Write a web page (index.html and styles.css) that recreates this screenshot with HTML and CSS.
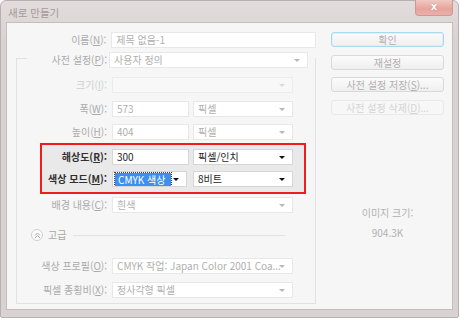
FILE: index.html
```html
<!DOCTYPE html>
<html lang="ko">
<head>
<meta charset="utf-8">
<title>새로 만들기</title>
<link rel="stylesheet" href="styles.css">
</head>
<body>
<div class="window">
  <div class="titlebar">
    <span class="title">새로 만들기</span>
    <div class="close">x</div>
  </div>
  <div class="client">
    <div class="left">
      <div class="row name-row">
        <span class="lbl lbl-name">이름(<u>N</u>):</span>
        <div class="field w-name">제목 없음-1</div>
      </div>
      <div class="group">
        <div class="row preset-row">
          <span class="lbl">사전 설정(<u>P</u>):</span>
          <div class="field select w-preset">사용자 정의<i class="arrow"></i></div>
        </div>
        <div class="row gap9">
          <span class="lbl dim">크기(<u>I</u>):</span>
          <div class="field select w-full disabled"><i class="arrow"></i></div>
        </div>
        <div class="row gap8">
          <span class="lbl">폭(<u>W</u>):</span>
          <div class="field w-num">573</div>
          <div class="field select w-unit">픽셀<i class="arrow"></i></div>
        </div>
        <div class="row gap7">
          <span class="lbl">높이(<u>H</u>):</span>
          <div class="field w-num">404</div>
          <div class="field select w-unit">픽셀<i class="arrow"></i></div>
        </div>
        <div class="highlight">
          <div class="row">
            <span class="lbl strong">해상도(<u>R</u>):</span>
            <div class="field active w-num">300</div>
            <div class="field select active w-unit">픽셀/인치<i class="arrow dark"></i></div>
          </div>
          <div class="row gap6">
            <span class="lbl strong">색상 모드(<u>M</u>):</span>
            <div class="field select active w-mode"><span class="selected">CMYK 색상</span><i class="arrow dark"></i></div>
            <div class="field select active w-unit after-mode">8비트<i class="arrow dark"></i></div>
          </div>
        </div>
        <div class="row gap3">
          <span class="lbl">배경 내용(<u>C</u>):</span>
          <div class="field select w-full">흰색<i class="arrow"></i></div>
        </div>
        <div class="advanced">
          <span class="adv-icon"><svg width="7" height="7" viewBox="0 0 7 7"><path d="M1 3.5 L3.5 1 L6 3.5 M1 6 L3.5 3.5 L6 6" fill="none" stroke="#a8a8a8" stroke-width="1"/></svg></span>
          <span class="adv-text">고급</span>
          <span class="adv-line"></span>
        </div>
        <div class="row gap17">
          <span class="lbl">색상 프로필(<u>O</u>):</span>
          <div class="field select w-full">CMYK 작업: Japan Color 2001 Coa...<i class="arrow"></i></div>
        </div>
        <div class="row gap8">
          <span class="lbl">픽셀 종횡비(<u>X</u>):</span>
          <div class="field select w-full">정사각형 픽셀<i class="arrow"></i></div>
        </div>
      </div>
    </div>
    <div class="right">
      <div class="btn default">확인</div>
      <div class="btn m8">재설정</div>
      <div class="btn m7">사전 설정 저장(<u>S</u>)...</div>
      <div class="btn m8 off">사전 설정 삭제(<u>D</u>)...</div>
      <div class="info-label">이미지 크기:</div>
      <div class="info-value">904.3K</div>
    </div>
  </div>
</div>
</body>
</html>
```
FILE: styles.css
```css
* { box-sizing: border-box; }
html, body { margin: 0; padding: 0; background: #ffffff; }
body {
  font-family: "Noto Sans CJK KR", "Noto Sans", sans-serif;
  font-size: 10px;
  color: #a9a9a9;
}
u { text-decoration: underline; }

.window {
  width: 459px;
  height: 318px;
  background: linear-gradient(#e3dcdc, #d9d2d2 40px, #d8d2d2);
  border: 1px solid #b9b1b1;
  border-radius: 6px 6px 2px 2px;
  display: flex;
  flex-direction: column;
}
.titlebar {
  height: 21px;
  display: flex;
  align-items: center;
  justify-content: space-between;
  padding-left: 7px;
  padding-right: 5px;
}
.title { color: #a39a9a; font-size: 10.5px; line-height: 14px; margin-top: 2px; }
.close {
  align-self: flex-start;
  width: 38px;
  height: 16px;
  margin-top: -1px;
  background: linear-gradient(#f1c9c3, #e6a39c 60%, #eab0a8);
  border: 1px solid #c99a96;
  border-top: none;
  border-radius: 0 0 4px 4px;
  color: #ffffff;
  font-family: "DejaVu Sans", sans-serif;
  font-weight: bold;
  font-size: 10px;
  line-height: 14px;
  text-align: center;
  text-shadow: 0 0 1px #b07070;
}

.client {
  margin: 0 5px 0 5px;
  height: 288px;
  background: #f6f6f6;
  border: 1px solid #c4bdbd;
  display: flex;
}
.left { width: 309px; display: flex; flex-direction: column; padding-top: 9px; }
.right { width: 113px; margin-left: 15px; display: flex; flex-direction: column; padding-top: 9px; }

.row { display: flex; align-items: center; height: 16px; }
.lbl {
  width: 90px;
  margin-right: 5px;
  text-align: right;
  white-space: nowrap;
  line-height: 16px;
  color: #ababab;
}
.lbl-name { width: 100px; }
.lbl.dim { color: #d0d0d0; }
.lbl.strong { width: 65px; color: #303030; font-weight: bold; }

.field {
  position: relative;
  height: 16px;
  background: #ffffff;
  border: 1px solid #e8e8e8;
  line-height: 14px;
  padding-left: 4px;
  color: #afafaf;
  white-space: nowrap;
  overflow: hidden;
}
.field.disabled { background: #f8f8f8; border-color: #ececec; }
.field + .field { margin-left: 4px; }
.field.after-mode { margin-left: 6px; }
.field.active { border-color: #d6d6d6; color: #1e1e1e; }
.arrow {
  position: absolute;
  right: 7px;
  top: 6px;
  width: 0; height: 0;
  border-left: 3px solid transparent;
  border-right: 3px solid transparent;
  border-top: 3px solid #b8b8b8;
}
.field.disabled .arrow { border-top-color: #dadada; }
.arrow.dark { border-top-color: #101010; }

.w-name { width: 206px; }
.w-preset { width: 199px; }
.w-full { width: 181px; }
.w-num { width: 77px; }
.w-unit { width: 100px; }
.w-mode { width: 75px; padding-left: 2px; padding-top: 1px; }
.selected {
  display: inline-block;
  background: #3a8ff0;
  color: #ffffff;
  height: 13px;
  line-height: 13px;
  padding: 0 6px 0 3px;
  outline: 1px dotted #404040;
  vertical-align: top;
}

.group {
  margin-left: 9px;
  margin-top: 10px;
  width: 300px;
  border: 1px solid #e2e2e2;
  border-top: none;
  position: relative;
  padding-bottom: 5px;
}
.group::before {
  content: "";
  position: absolute;
  left: -1px;
  top: 0;
  width: 11px;
  height: 1px;
  background: #e2e2e2;
}
.preset-row { margin-top: -6px; }
.preset-row .lbl { margin-right: 2px; }

.gap3 { margin-top: 3px; }
.gap6 { margin-top: 6px; }
.gap7 { margin-top: 7px; }
.gap8 { margin-top: 8px; }
.gap9 { margin-top: 9px; }
.gap17 { margin-top: 17px; }

.highlight {
  margin: 3px 9px 0 23px;
  border: 2px solid #ee1c1c;
  background: #e9e9e9;
  padding: 4px 0 5px 0;
}

.advanced {
  display: flex;
  align-items: center;
  height: 12px;
  margin-top: 16px;
  padding-left: 14px;
}
.adv-icon {
  width: 12px; height: 12px;
  border: 1px solid #cfcfcf;
  border-radius: 50%;
  background: #fbfbfb;
  display: flex;
  align-items: center;
  justify-content: center;
}
.adv-text { margin-left: 5px; line-height: 12px; color: #a8a8a8; }
.adv-line { width: 212px; height: 1px; background: #e2e2e2; margin-left: 7px; }

.btn {
  height: 15px;
  border: 1px solid #d9d9d9;
  border-radius: 3px;
  background: linear-gradient(#fbfbfb, #efefef);
  text-align: center;
  line-height: 13px;
  color: #b0b0b0;
  white-space: nowrap;
}
.btn.default { border-color: #a9d9ef; box-shadow: inset 0 0 0 1px #def1fa; }
.btn.m8 { margin-top: 8px; }
.btn.m7 { margin-top: 7px; }
.btn.off { border-color: #e9e9e9; background: #f7f7f7; color: #d4d4d4; }
.info-label { margin-top: 91px; text-align: center; line-height: 14px; color: #b2b2b2; }
.info-value { margin-top: 6px; text-align: center; line-height: 14px; color: #b2b2b2; }
```
